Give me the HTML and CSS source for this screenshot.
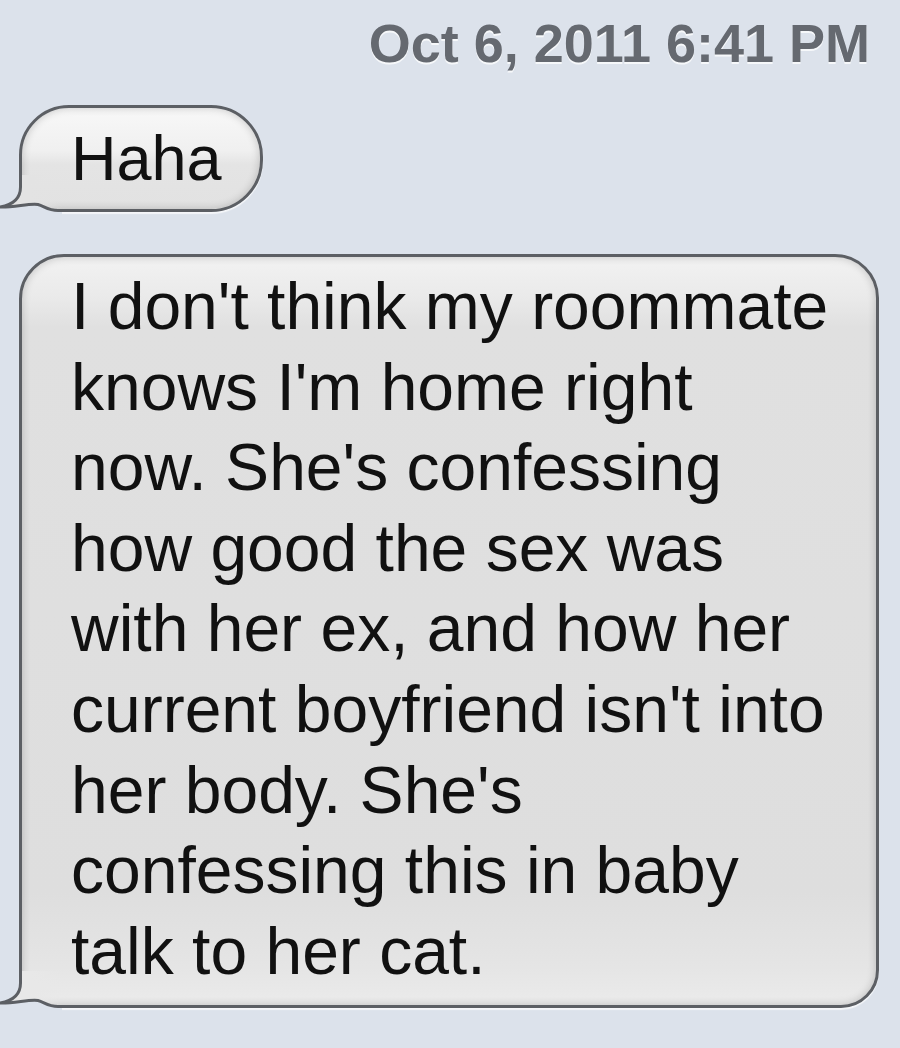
FILE: index.html
```html
<!DOCTYPE html>
<html>
<head>
<meta charset="utf-8">
<link rel="stylesheet" href="styles.css">
</head>
<body>
<div class="thread">
  <div class="stamp">Oct 6, 2011 6:41 PM</div>
  <div class="bubble bubble-short">
    <span class="msg">Haha</span>
    <svg class="tail" width="62" height="40" viewBox="0 0 62 40">
      <defs>
        <linearGradient id="tailShort" gradientUnits="userSpaceOnUse" x1="0" y1="0" x2="62" y2="0">
          <stop offset="0" stop-color="#e3e3e3"/>
          <stop offset="0.5" stop-color="#e3e3e3"/>
          <stop offset="1" stop-color="#e3e3e3" stop-opacity="0"/>
        </linearGradient>
      </defs>
      <path class="tail-bg" d="M0 32 C14 32.5 30 28 38 29.5 C44 31 48 35.5 58 35.5 L62 35.5 L62 40 L0 40 Z"/>
      <path fill="url(#tailShort)" d="M20.5 0 L20.5 12 C20.5 24 12 30 0 32 C14 32.5 30 28 38 29.5 C44 31 48 35.5 58 35.5 L62 35.5 L62 0 Z"/>
      <path class="tail-line" d="M20.5 0 L20.5 12 C20.5 24 12 30 0 32 C14 32.5 30 28 38 29.5 C44 31 48 35.5 58 35.5 L62 35.5"/>
    </svg>
  </div>
  <div class="bubble bubble-long">
    <p class="msg">I don't think my roommate<br>knows I'm home right<br>now. She's confessing<br>how good the sex was<br>with her ex, and how her<br>current boyfriend isn't into<br>her body. She's<br>confessing this in baby<br>talk to her cat.</p>
    <svg class="tail" width="62" height="40" viewBox="0 0 62 40">
      <defs>
        <linearGradient id="tailLong" gradientUnits="userSpaceOnUse" x1="0" y1="0" x2="62" y2="0">
          <stop offset="0" stop-color="#e8e8e8"/>
          <stop offset="0.5" stop-color="#e8e8e8"/>
          <stop offset="1" stop-color="#e8e8e8" stop-opacity="0"/>
        </linearGradient>
      </defs>
      <path class="tail-bg" d="M0 32 C14 32.5 30 28 38 29.5 C44 31 48 35.5 58 35.5 L62 35.5 L62 40 L0 40 Z"/>
      <path fill="url(#tailLong)" d="M20.5 0 L20.5 12 C20.5 24 12 30 0 32 C14 32.5 30 28 38 29.5 C44 31 48 35.5 58 35.5 L62 35.5 L62 0 Z"/>
      <path class="tail-line" d="M20.5 0 L20.5 12 C20.5 24 12 30 0 32 C14 32.5 30 28 38 29.5 C44 31 48 35.5 58 35.5 L62 35.5"/>
    </svg>
  </div>
</div>
</body>
</html>
```
FILE: styles.css
```css
html, body {
  margin: 0;
  padding: 0;
}
body {
  background: #dce2eb;
  font-family: "Liberation Sans", Arial, Helvetica, sans-serif;
  width: 900px;
  height: 1048px;
  overflow: hidden;
}
.thread {
  display: flex;
  flex-direction: column;
  align-items: flex-start;
  padding-top: 13px;
}
.stamp {
  align-self: stretch;
  text-align: right;
  padding-right: 30px;
  font-size: 54px;
  line-height: 60px;
  font-weight: bold;
  color: #656970;
  text-shadow: 0 2px 0 rgba(255,255,255,0.75);
}
.bubble {
  position: relative;
  margin-left: 19px;
  border: 3px solid #5c5f64;
  border-bottom-left-radius: 0;
  color: #111;
  box-shadow: inset 0 0 8px rgba(0,0,0,0.2), 0 2px 1px rgba(255,255,255,0.7);
}
.bubble-short {
  margin-top: 32px;
  padding: 10px 38px 11px 49px;
  border-radius: 50px 52px 52px 0;
  background: linear-gradient(#f8f8f8 0, #f0f0f0 42%, #e4e4e4 56%, #e2e2e2 100%);
}
.bubble-short .msg {
  display: block;
  font-size: 63px;
  line-height: 80px;
}
.bubble-long {
  margin-top: 42px;
  width: 805px;
  padding: 9px 0 14px 49px;
  border-radius: 45px 44px 38px 0;
  background: linear-gradient(#f2f2f2 0, #eaeaea 40px, #e0e0e0 70px, #dedede 85%, #e5e5e5 95%, #ebebeb 100%);
}
.bubble-long .msg {
  margin: 0;
  font-size: 66px;
  line-height: 80.6px;
}
.tail {
  position: absolute;
  left: -22px;
  bottom: -6px;
  display: block;
}
.tail-bg {
  fill: #dce2eb;
}
.tail-line {
  fill: none;
  stroke: #5c5f64;
  stroke-width: 3;
}
```
